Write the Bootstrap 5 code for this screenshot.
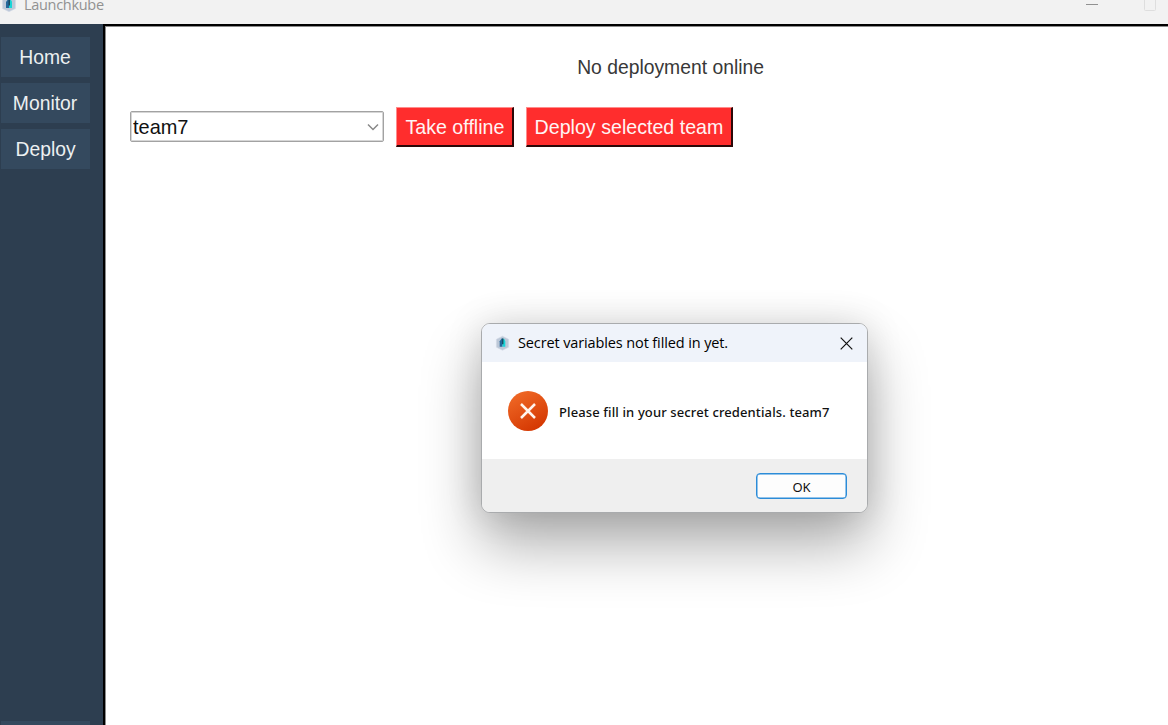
<!DOCTYPE html>
<html lang="en">
<head>
<meta charset="utf-8">
<meta name="viewport" content="width=device-width, initial-scale=1">
<title>Launchkube</title>
<link href="https://cdn.jsdelivr.net/npm/bootstrap@5.3.0/dist/css/bootstrap.min.css" rel="stylesheet">
<style>
body{font-family:"Liberation Sans",Arial,sans-serif;font-size:21px;line-height:24px;background:#fff;color:#333}
.app-window{height:100vh}
.title-strip{height:24px;background:#f2f2f2;color:#919191;font:14.5px/10px "Open Sans","Noto Sans",sans-serif}
.title-strip .window-name{margin:0 0 0 7px;letter-spacing:-.3px}
.title-strip .app-logo{margin:-4px 0 0 1px}
.window-buttons{margin-right:11px}
.side-menu{width:103px;background:#2d3e50;padding:13px 0 0 1px}
.side-menu .menu-button{width:89px;height:40px;margin-bottom:6px;background:#34495e;color:#ecf0f1;border:0;padding:0}
.side-menu .menu-next{height:4px;margin-bottom:0}
.work-area{border:solid #000;border-width:2px 0 0 2px;box-shadow:inset 1px 1px #8c8c8c}
.narrow{display:inline-block;transform:scaleX(.92);white-space:nowrap}
.status-line{margin:29px 0 0 69px;width:993px;color:#383838}
.tool-row{margin:27px 0 0 25px;height:41px}
.team-select{width:254px;height:31px;border:1px solid #a2a2a2;box-shadow:inset 0 0 0 1px #d6d6d6;border-radius:2px;background:#fff;color:#111;padding:0 4px 0 2px}
.team-select .narrow{transform:scaleX(.95);transform-origin:left}
.red-button{height:40px;background:#ff2d2d;color:#fff4f4;border:2px solid;border-color:#ff8c8c #2b0808 #2b0808 #ff8c8c;border-width:1px 2px 2px 1px;border-radius:0;padding:1px 0 0}
.red-button .narrow{transform:scaleX(.935)}
.take-button{width:118px;margin-left:12px}
.deploy-button{width:207px;margin-left:12px}
.deploy-button .narrow{margin-left:-1px}
.alert-window{position:absolute;left:481px;top:323px;width:387px;height:190px;border:1px solid #a9abad;border-radius:9px;background:#fff;box-shadow:0 32px 60px rgba(0,0,0,.32),0 0 36px rgba(0,0,0,.13);color:#000}
.alert-clip{border-radius:8px;overflow:hidden}
.alert-head{height:38px;background:#eff3fa;font:14.5px/20px "Open Sans","Noto Sans",sans-serif;padding:0 14px 0 13px}
.alert-head .heading{margin-left:8px;letter-spacing:-.12px}
.alert-text{font:13px/18px "Noto Sans","Open Sans",sans-serif;font-weight:500;padding:0 0 0 26px;color:#111}
.alert-text .message{margin:3px 0 0 11px;white-space:nowrap;letter-spacing:.12px}
.alert-foot{height:53px;background:#efefef;padding:1px 20px 0 0}
.ok-button{width:91px;height:26px;background:#fdfdfd;border:1px solid #2c8cd8;border-radius:4px;box-shadow:inset 0 0 0 .5px #2c8cd8;font:13px/18px "Noto Sans","Open Sans",sans-serif;color:#111;padding:1px 0 0}
</style>
<script src="https://cdn.jsdelivr.net/npm/bootstrap@5.3.0/dist/js/bootstrap.bundle.min.js"></script>
</head>
<body>
<svg width="0" height="0" class="position-absolute">
<symbol id="logo" viewBox="0 0 16 16"><path d="M8 .7 14.500 4v8.500L8 15.700 1.500 12.500V4Z" fill="#bcc8d8" stroke="#d3dae5" stroke-width=".6"/><path d="M5 12V6l2-2.700h1V12Z" fill="#24679b"/><path d="M8 3.300q2.800.3 3 3V12H8Z" fill="#18d5d7"/><path d="M7.500 3.200H9v6.200H7.500Z" fill="#174b62"/></symbol>
</svg>
<div class="app-window d-flex flex-column overflow-hidden">
  <header class="title-strip d-flex flex-shrink-0">
    <svg class="app-logo" width="16" height="16"><use href="#logo"/></svg>
    <span class="window-name">Launchkube</span>
    <svg class="window-buttons ms-auto" width="72" height="14" fill="none"><path d="M1 4.500h12" stroke="#919191"/><rect x="59.500" y="-1.500" width="11" height="12" rx="1" stroke="#dedede"/></svg>
  </header>
  <div class="d-flex flex-grow-1">
    <nav class="side-menu d-flex flex-column">
      <button class="menu-button"><span class="narrow">Home</span></button>
      <button class="menu-button"><span class="narrow">Monitor</span></button>
      <button class="menu-button"><span class="narrow">Deploy</span></button>
      <div class="menu-button menu-next mt-auto"></div>
    </nav>
    <main class="work-area flex-grow-1">
      <div class="status-line text-center"><span class="narrow">No deployment online</span></div>
      <div class="tool-row d-flex align-items-center">
        <div class="team-select d-flex align-items-center justify-content-between"><span class="narrow">team7</span><svg width="12" height="8" fill="none" stroke="#888" stroke-width="1.500"><path d="m1 1.500 5 5 5-5"/></svg></div>
        <button class="red-button take-button"><span class="narrow">Take offline</span></button>
        <button class="red-button deploy-button"><span class="narrow">Deploy selected team</span></button>
      </div>
    </main>
  </div>
</div>
<section class="alert-window" role="dialog">
  <div class="alert-clip d-flex flex-column h-100">
    <div class="alert-head d-flex align-items-center flex-shrink-0">
      <svg width="15" height="16"><use href="#logo"/></svg>
      <span class="heading">Secret variables not filled in yet.</span>
      <svg class="ms-auto" width="13" height="13" stroke="#111" stroke-width="1.200"><path d="m.7.7 11.600 11.600M12.300.7.7 12.300"/></svg>
    </div>
    <div class="alert-text d-flex align-items-center flex-grow-1">
      <svg width="40" height="40" fill="none"><defs><linearGradient id="orange" x1=".2" y1="0" x2=".75" y2="1"><stop stop-color="#f06a27"/><stop offset="1" stop-color="#d33500"/></linearGradient></defs><circle cx="20" cy="20" r="20" fill="url(#orange)"/><path d="m13 13 14 14m0-14-14 14" stroke="#fff3ec" stroke-width="2.500"/></svg>
      <span class="message">Please fill in your secret credentials. team7</span>
    </div>
    <div class="alert-foot d-flex align-items-center justify-content-end flex-shrink-0"><button class="ok-button">OK</button></div>
  </div>
</section>
</body>
</html>
